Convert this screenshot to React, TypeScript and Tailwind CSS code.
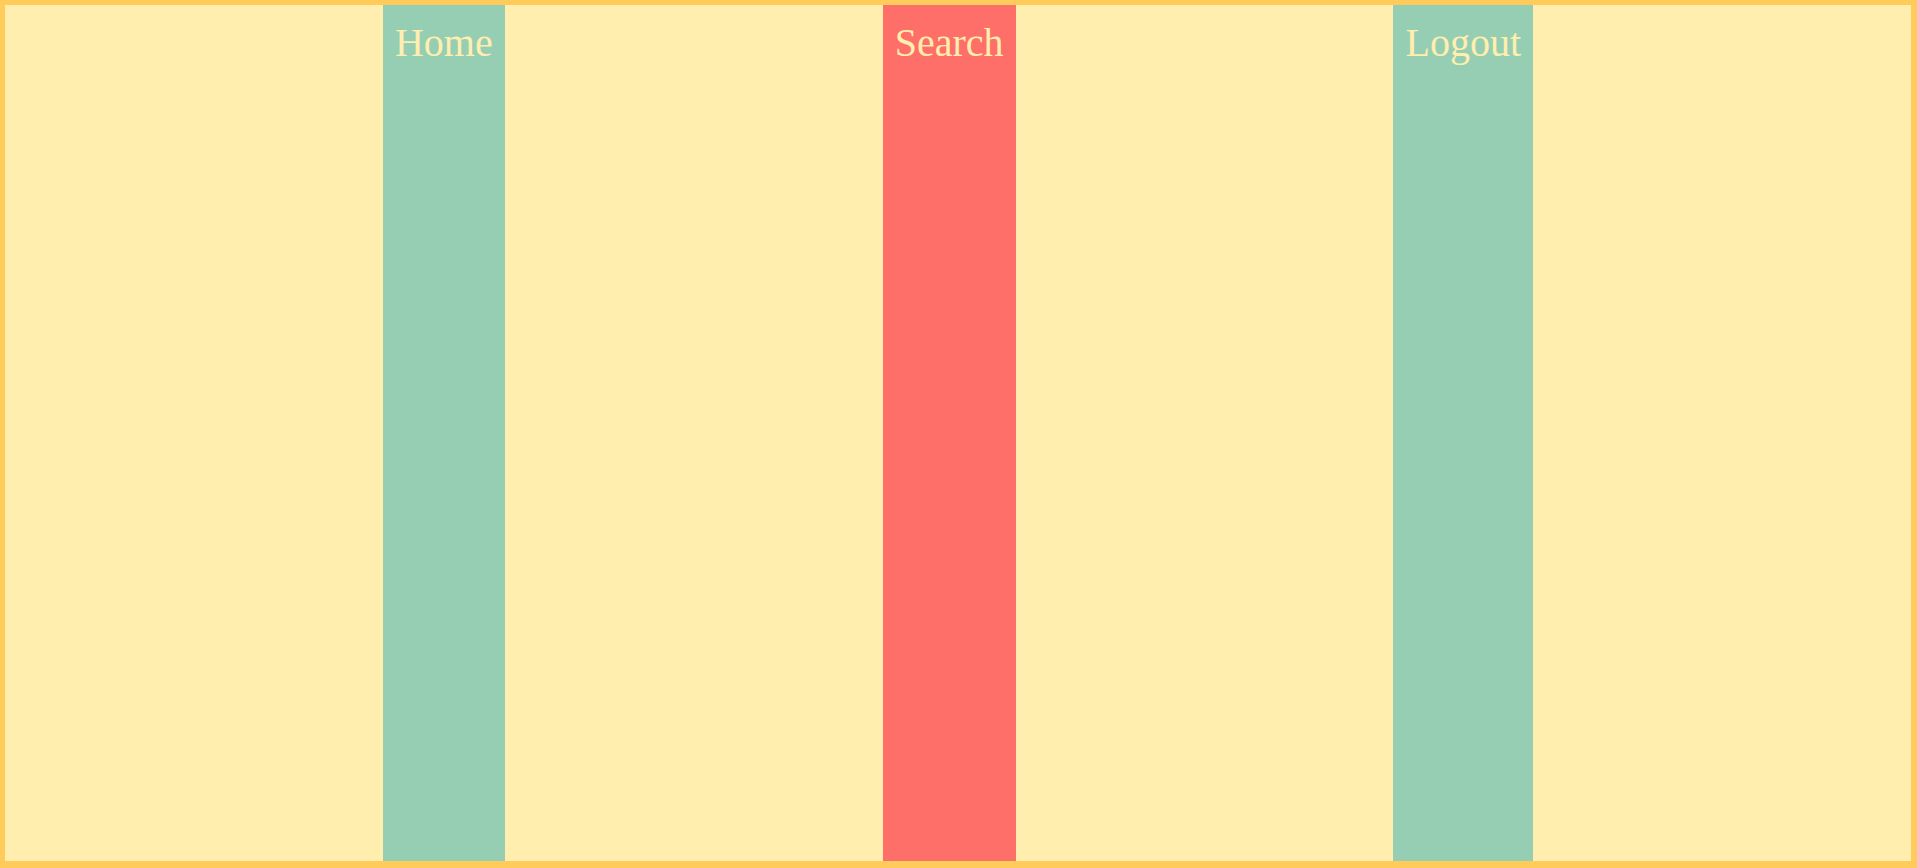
const links = [
  { label: 'Home', active: false },
  { label: 'Search', active: true },
  { label: 'Logout', active: false },
]

export default function App() {
  return (
    <div className="flex h-screen w-full justify-evenly border-[#ffcc5c] border-t-[5px] border-l-[5px] border-r-[6px] border-b-[7px] bg-[#ffeead]">
      {links.map((l) => (
        <a
          key={l.label}
          href="#"
          className={
            'block px-3 pt-[14px] text-[40px] leading-[normal] text-[#ffeead] ' +
            (l.active ? 'bg-[#ff6f69]' : 'bg-[#96ceb4]')
          }
          style={{ fontFamily: '"Liberation Serif", "Times New Roman", serif' }}
        >
          {l.label}
        </a>
      ))}
    </div>
  )
}
